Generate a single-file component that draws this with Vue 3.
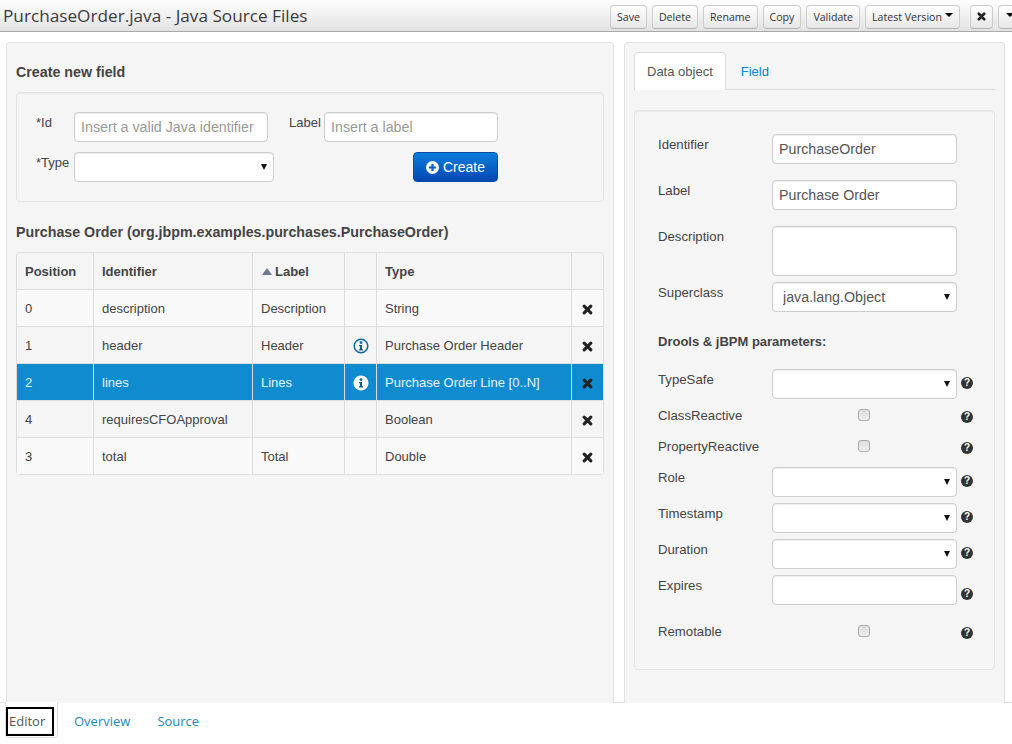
<script setup>
const toolbarButtons = ['Save', 'Delete', 'Rename', 'Copy', 'Validate'];

const fields = [
	{ position: 0, identifier: 'description', label: 'Description', info: false, type: 'String', striped: true },
	{ position: 1, identifier: 'header', label: 'Header', info: true, type: 'Purchase Order Header' },
	{ position: 2, identifier: 'lines', label: 'Lines', info: true, type: 'Purchase Order Line [0..N]', selected: true },
	{ position: 4, identifier: 'requiresCFOApproval', label: '', info: false, type: 'Boolean' },
	{ position: 3, identifier: 'total', label: 'Total', info: false, type: 'Double', striped: true },
];

const params = [
	{ name: 'TypeSafe', kind: 'select' },
	{ name: 'ClassReactive', kind: 'check' },
	{ name: 'PropertyReactive', kind: 'check' },
	{ name: 'Role', kind: 'select' },
	{ name: 'Timestamp', kind: 'select' },
	{ name: 'Duration', kind: 'select' },
	{ name: 'Expires', kind: 'input' },
	{ name: 'Remotable', kind: 'check' },
];
</script>

<template>
	<div class="page">
		<header class="topbar">
			<h1 class="title">PurchaseOrder.java - Java Source Files</h1>
			<div class="toolbar">
				<button v-for="b in toolbarButtons" :key="b" class="tool-btn">{{ b }}</button>
				<button class="tool-btn">Latest Version <span class="caret"></span></button>
				<button class="tool-btn close-btn">
					<svg width="9" height="9" viewBox="0 0 10 10"><path d="M2 2l6 6M8 2l-6 6" stroke="#222" stroke-width="3" stroke-linecap="round" /></svg>
				</button>
				<button class="tool-btn more-btn"><span class="caret"></span></button>
			</div>
		</header>

		<main class="content">
			<section class="panel left-panel">
				<h2 class="heading">Create new field</h2>
				<div class="well create-well">
					<div class="create-row">
						<label class="create-label">*Id</label>
						<input class="control id-input" placeholder="Insert a valid Java identifier" />
						<label class="label-label">Label</label>
						<input class="control label-input" placeholder="Insert a label" />
					</div>
					<div class="create-row second">
						<label class="create-label">*Type</label>
						<div class="select-wrap type-select">
							<select class="control"></select>
						</div>
						<button class="create-btn">
							<svg width="13" height="13" viewBox="0 0 14 14"><circle cx="7" cy="7" r="7" fill="#fff" /><path d="M7 3.2v7.6M3.2 7h7.6" stroke="#0a5cc4" stroke-width="2.4" /></svg>
							Create
						</button>
					</div>
				</div>

				<h2 class="heading object-heading">Purchase Order (org.jbpm.examples.purchases.PurchaseOrder)</h2>
				<table class="fields">
					<colgroup>
						<col style="width: 76px" />
						<col style="width: 159px" />
						<col style="width: 92px" />
						<col style="width: 32px" />
						<col style="width: 195px" />
						<col style="width: 32px" />
					</colgroup>
					<thead>
						<tr>
							<th>Position</th>
							<th>Identifier</th>
							<th><span class="sort"></span>Label</th>
							<th></th>
							<th>Type</th>
							<th></th>
						</tr>
					</thead>
					<tbody>
						<tr v-for="f in fields" :key="f.identifier" :class="{ selected: f.selected, striped: f.striped }">
							<td>{{ f.position }}</td>
							<td>{{ f.identifier }}</td>
							<td>{{ f.label }}</td>
							<td class="icon-cell">
								<svg v-if="f.info" class="info" width="16" height="16" viewBox="0 0 16 16">
									<circle cx="8" cy="8" r="6.8" :fill="f.selected ? '#fff' : '#f5f5f5'" :stroke="f.selected ? '#fff' : '#0b6a9e'" stroke-width="1.5" />
									<circle cx="8" cy="4.6" r="1.4" fill="#0b5f8e" />
									<path d="M6 7h3v4.2h1v1.2H6v-1.2h1V8.2H6z" fill="#0b5f8e" />
								</svg>
							</td>
							<td>{{ f.type }}</td>
							<td class="icon-cell remove-cell">
								<svg width="11" height="11" viewBox="0 0 12 12"><path d="M2.4 2.4l7.2 7.2M9.6 2.4l-7.2 7.2" stroke="#222" stroke-width="3.4" stroke-linecap="round" /></svg>
							</td>
						</tr>
					</tbody>
				</table>
			</section>

			<section class="panel right-panel">
				<nav class="tabs">
					<a class="tab active">Data object</a>
					<a class="tab">Field</a>
				</nav>
				<div class="well props">
					<div class="prop-row">
						<label class="prop-label">Identifier</label>
						<input class="control prop-control" value="PurchaseOrder" />
					</div>
					<div class="prop-row">
						<label class="prop-label">Label</label>
						<input class="control prop-control" value="Purchase Order" />
					</div>
					<div class="prop-row area-row">
						<label class="prop-label">Description</label>
						<textarea class="control prop-control prop-area"></textarea>
					</div>
					<div class="prop-row super-row">
						<label class="prop-label">Superclass</label>
						<div class="select-wrap prop-control">
							<select class="control">
								<option>java.lang.Object</option>
							</select>
						</div>
					</div>
					<h3 class="params-heading">Drools &amp; jBPM parameters:</h3>
					<div v-for="p in params" :key="p.name" class="param-row" :class="'is-' + p.kind">
						<label class="prop-label">{{ p.name }}</label>
						<div v-if="p.kind === 'select'" class="select-wrap prop-control">
							<select class="control"></select>
						</div>
						<input v-else-if="p.kind === 'input'" class="control prop-control" />
						<div v-else class="check-wrap"><input type="checkbox" class="check" /></div>
						<span class="help">?</span>
					</div>
				</div>
			</section>
		</main>

		<footer class="bottom-tabs">
			<div class="bottom-tab active"><a class="focused">Editor</a></div>
			<a class="bottom-tab link overview">Overview</a>
			<a class="bottom-tab link source">Source</a>
		</footer>
	</div>
</template>

<style scoped>
.page {
	width: 1012px;
	height: 744px;
	overflow: hidden;
	background: #fff;
	font-family: "Liberation Sans", Arial, sans-serif;
	font-size: 13px;
	color: #444;
}
.topbar {
	height: 32px;
	box-sizing: border-box;
	display: flex;
	align-items: flex-start;
	border-bottom: 1px solid #a8a8a8;
	background: linear-gradient(#fff, #e2e2e2);
	overflow: hidden;
}
.title {
	flex: 0 0 610px;
	margin: 0;
	padding-left: 3px;
	box-sizing: border-box;
	font-family: "Open Sans", sans-serif;
	font-size: 17.2px;
	font-weight: 400;
	line-height: 32px;
	color: #3c3c3c;
	white-space: nowrap;
}
.toolbar {
	display: flex;
	flex: 0 0 auto;
	gap: 5px;
	margin-top: 5px;
}
.tool-btn {
	height: 24px;
	box-sizing: border-box;
	padding: 0 6px;
	font-family: "Open Sans", sans-serif;
	font-size: 10.6px;
	color: #333;
	background: linear-gradient(#fff, #e6e6e6);
	border: 1px solid #ccc;
	border-bottom-color: #b3b3b3;
	border-radius: 4px;
	white-space: nowrap;
	flex: 0 0 auto;
}
.caret {
	display: inline-block;
	width: 0;
	height: 0;
	vertical-align: 4px;
	border-left: 4px solid transparent;
	border-right: 4px solid transparent;
	border-top: 4px solid #000;
}
.close-btn {
	width: 23px;
	margin-left: 5px;
	padding: 0;
}
.more-btn {
	width: 24px;
	padding: 0;
}
.content {
	height: 660px;
	padding: 10px 7px 0 6px;
	display: flex;
	gap: 10px;
}
.panel {
	box-sizing: border-box;
	height: 661px;
	background: #f5f5f5;
	border: 1px solid #e3e3e3;
	border-bottom: 0;
	border-radius: 4px 4px 0 0;
}
.left-panel {
	width: 608px;
	padding: 19px 9px 0;
}
.right-panel {
	width: 381px;
	padding: 9px 9px 0;
}
.heading {
	margin: 0;
	font-size: 14.25px;
	line-height: 20px;
	font-weight: 700;
	color: #444;
	white-space: nowrap;
}
.well {
	background: #f5f5f5;
	border: 1px solid #e3e3e3;
	border-radius: 4px;
	box-shadow: inset 0 1px 1px rgba(0, 0, 0, 0.05);
	box-sizing: border-box;
}
.create-well {
	margin-top: 10px;
	height: 110px;
	padding: 19px 19px 0;
}
.create-row {
	display: flex;
	align-items: flex-start;
}
.create-row.second {
	margin-top: 10px;
}
.create-label {
	width: 38px;
	flex: 0 0 38px;
	line-height: 20px;
	padding-top: 1px;
	font-size: 13px;
}
.label-label {
	margin-left: 21px;
	width: 35px;
	line-height: 20px;
	padding-top: 1px;
}
.control {
	box-sizing: border-box;
	height: 30px;
	padding: 4px 6px;
	font-family: "Liberation Sans", Arial, sans-serif;
	font-size: 14.25px;
	color: #555;
	background: #fff;
	border: 1px solid #ccc;
	border-radius: 4px;
	box-shadow: inset 0 1px 1px rgba(0, 0, 0, 0.075);
	outline: none;
}
.control::placeholder {
	color: #999;
}
.id-input {
	width: 194px;
}
.label-input {
	width: 174px;
}
.select-wrap {
	position: relative;
	height: 30px;
}
.select-wrap select {
	display: block;
	width: 100%;
	appearance: none;
	padding-left: 10px;
}
.select-wrap::after {
	content: "";
	position: absolute;
	right: 7px;
	top: 12px;
	border-left: 3.5px solid transparent;
	border-right: 3.5px solid transparent;
	border-top: 6px solid #111;
	pointer-events: none;
}
.type-select {
	width: 200px;
}
.create-btn {
	display: flex;
	align-items: center;
	justify-content: center;
	gap: 4px;
	width: 85px;
	height: 30px;
	margin-left: 139px;
	box-sizing: border-box;
	font-family: "Liberation Sans", Arial, sans-serif;
	font-size: 14px;
	color: #fff;
	background: linear-gradient(#0a7ddb, #0348b4);
	border: 1px solid #0a4aa5;
	border-radius: 4px;
}
.object-heading {
	margin-top: 20px;
}
.fields {
	width: 588px;
	margin-top: 10px;
	table-layout: fixed;
	border-collapse: separate;
	border-spacing: 0;
	border: 1px solid #ddd;
	border-radius: 4px;
	box-sizing: border-box;
	font-size: 13px;
}
.fields th,
.fields td {
	height: 37px;
	box-sizing: border-box;
	padding: 0 8px;
	text-align: left;
	border-left: 1px solid #ddd;
	border-top: 1px solid #ddd;
	vertical-align: middle;
	white-space: nowrap;
}
.fields th:first-child,
.fields td:first-child {
	border-left: 0;
}
.fields thead th {
	border-top: 0;
	height: 36px;
	font-weight: 700;
	color: #444;
}
.fields tr.striped td {
	background: #f9f9f9;
}
.fields tr.selected td {
	background: #0f8bd0;
	color: #e8f4fb;
}
.sort {
	display: inline-block;
	width: 0;
	height: 0;
	margin: 0 3px 2px 1px;
	vertical-align: middle;
	border-left: 5px solid transparent;
	border-right: 5px solid transparent;
	border-bottom: 7px solid #6d7890;
}
.icon-cell {
	padding: 0 !important;
	text-align: center !important;
}
.info {
	display: block;
	margin: 2px auto 0;
}
.remove-cell svg {
	display: block;
	margin: 3px auto 0;
}
.tabs {
	display: flex;
	height: 38px;
	box-sizing: border-box;
	border-bottom: 1px solid #ddd;
}
.tab {
	padding: 0 12px;
	line-height: 38px;
	color: #0088cc;
	border: 1px solid transparent;
	border-bottom: 0;
	border-radius: 4px 4px 0 0;
	height: 38px;
	box-sizing: border-box;
}
.tab.active {
	background: #fff;
	color: #555;
	border-color: #ddd;
	margin-right: 2px;
}
.props {
	margin-top: 20px;
	height: 560px;
	padding: 23px 23px 0;
}
.prop-row {
	display: flex;
	align-items: flex-start;
	margin-bottom: 16px;
}
.area-row {
	margin-bottom: 6px;
}
.super-row {
	margin-bottom: 0;
}
.prop-label {
	flex: 0 0 114px;
	line-height: 20px;
	padding-top: 1px;
	font-size: 13.2px;
}
.prop-control {
	width: 185px;
	flex: 0 0 185px;
}
.prop-area {
	height: 50px;
	resize: none;
	display: block;
}
.params-heading {
	margin: 20px 0 17px;
	font-size: 13px;
	line-height: 20px;
	font-weight: 700;
	color: #444;
}
.param-row {
	display: flex;
	align-items: flex-start;
	margin-bottom: 6px;
}
.param-row.is-check {
	height: 20px;
	margin-bottom: 11px;
}
.param-row.is-input {
	margin-bottom: 16px;
}
.check-wrap {
	flex: 0 0 185px;
	display: flex;
	justify-content: center;
	padding-top: 4px;
	padding-right: 1px;
	box-sizing: border-box;
}
.check {
	appearance: none;
	width: 12px;
	height: 12px;
	margin: 0;
	background: linear-gradient(#ddd, #eee);
	border: 1px solid #aaa;
	border-radius: 3px;
}
.help {
	flex: 0 0 12px;
	width: 12px;
	height: 12px;
	margin-left: 4px;
	margin-top: 8px;
	border-radius: 50%;
	background: #333;
	color: #fff;
	font-size: 10px;
	font-weight: 700;
	line-height: 12px;
	text-align: center;
}
.is-check .help {
	margin-top: 6px;
}
.is-input .help {
	margin-top: 13px;
}
.bottom-tabs {
	display: flex;
	height: 42px;
	box-sizing: border-box;
	border-top: 1px solid #ddd;
	padding-left: 5px;
	font-family: "Open Sans", sans-serif;
	font-size: 13px;
}
.bottom-tab.active {
	width: 53px;
	height: 36px;
	margin-top: -1px;
	box-sizing: border-box;
	background: #fff;
	border: 1px solid #ddd;
	border-top-color: #fff;
	border-radius: 0 0 4px 4px;
	padding-top: 4px;
}
.focused {
	display: block;
	width: 48px;
	height: 29px;
	box-sizing: border-box;
	border: 2.5px solid #000;
	color: #555;
	line-height: 24px;
	padding-left: 1px;
}
.bottom-tab.link {
	color: #1e88b8;
	line-height: 36px;
}
.overview {
	margin-left: 16px;
}
.source {
	margin-left: 27px;
}
</style>

<style>
html, body {
	margin: 0;
	background: #fff;
	overflow: hidden;
}
</style>
